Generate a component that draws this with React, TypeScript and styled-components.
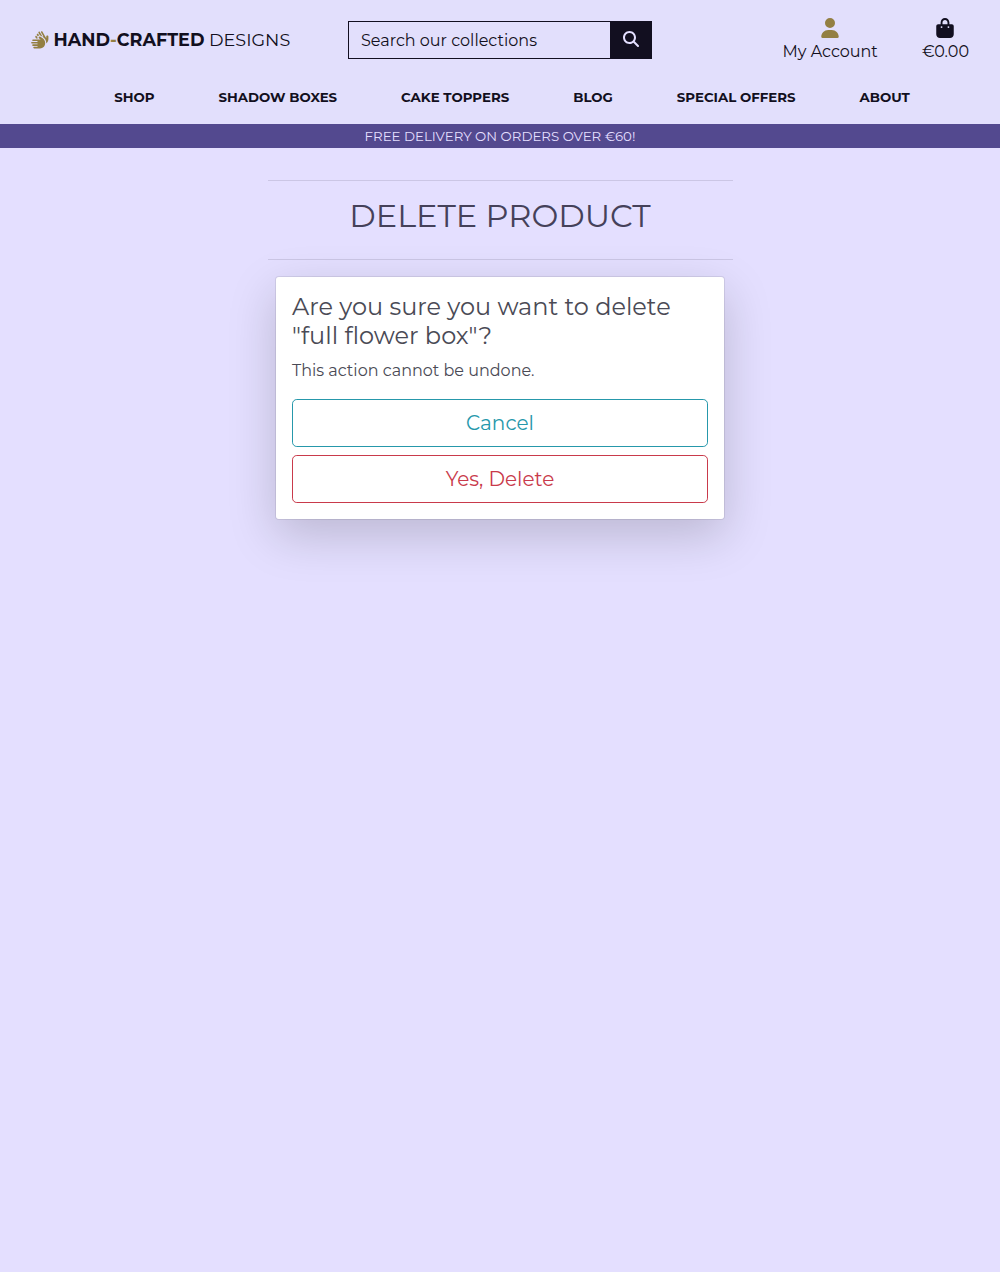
import React from 'react';
import styled, { createGlobalStyle } from 'styled-components';
import { FaHands, FaUser, FaBagShopping, FaMagnifyingGlass } from 'react-icons/fa6';

const ink = '#120f20';
const gold = '#937f42';
const lilac = '#e4dfff';

const GlobalStyle = createGlobalStyle`
  *, *::before, *::after { box-sizing: border-box; }
  body {
    margin: 0;
    background: ${lilac};
    font-family: Montserrat, Inter, sans-serif;
    font-size: 16px;
    color: ${ink};
  }
  a { color: inherit; text-decoration: none; }
`;

const Page = styled.div`
  min-height: 1272px;
`;

const Header = styled.header`
  background: #e2dffc;
  height: 124px;
`;

const TopBar = styled.div`
  display: grid;
  grid-template-columns: 318px 304px 1fr;
  align-items: center;
  height: 80px;
  padding: 0 31px 0 30px;
`;

const Logo = styled.a`
  display: flex;
  align-items: center;
  font-size: 17.6px;
  line-height: 24px;
  white-space: pre;
  svg { color: ${gold}; margin-right: 4px; flex: none; }
`;

const LogoBold = styled.span`
  font-weight: 700;
`;

const LogoDash = styled(LogoBold)`
  color: ${gold};
`;

const SearchForm = styled.form`
  display: flex;
  height: 38px;
  border: 1px solid ${ink};
`;

const SearchInput = styled.input`
  flex: 1;
  min-width: 0;
  border: 0;
  outline: 0;
  padding: 0 12px;
  background: transparent;
  font: 400 16px Montserrat, Inter, sans-serif;
  color: ${ink};
  &::placeholder { color: ${ink}; opacity: 1; }
`;

const SearchButton = styled.button`
  display: flex;
  align-items: center;
  justify-content: center;
  width: 41px;
  border: 0;
  padding: 0 0 2px;
  background: ${ink};
  color: ${lilac};
`;

const Tools = styled.div`
  display: flex;
  justify-content: flex-end;
  gap: 44px;
`;

const Tool = styled.a`
  display: flex;
  flex-direction: column;
  align-items: center;
  padding-top: 2px;
  line-height: 24px;
`;

const ToolIcon = styled.span<{ $color: string }>`
  display: flex;
  height: 22px;
  color: ${(p) => p.$color};
`;

const Nav = styled.nav`
  display: flex;
  justify-content: center;
  gap: 64px;
  padding: 5px 0 0 24px;
  font-size: 13.33px;
  font-weight: 700;
  line-height: 24px;
`;

const Banner = styled.div`
  height: 24px;
  background: #53498f;
  color: ${lilac};
  font-size: 13.33px;
  line-height: 24px;
  text-align: center;
`;

const Main = styled.main`
  width: 466px;
  margin: 32px auto 0;
  padding-left: 1px;
  color: #45415a;
`;

const Title = styled.h1`
  margin: 0;
  height: 80px;
  padding: 16px 1px 0 0;
  border-top: 1px solid #cbc6e5;
  border-bottom: 1px solid #cbc6e5;
  font-size: 32px;
  font-weight: 400;
  line-height: 38px;
  text-align: center;
`;

const Card = styled.section`
  margin: 16px 0 0 7px;
  width: 450px;
  height: 244px;
  padding: 16px 16px 0;
  background: #fff;
  background-clip: padding-box;
  border: 1px solid rgba(0, 0, 0, 0.08);
  border-radius: 4px;
  box-shadow: 0 16px 48px rgba(0, 0, 0, 0.175);
  color: #4a4a55;
`;

const Question = styled.h2`
  margin: 0 0 8px;
  font-size: 24px;
  font-weight: 400;
  line-height: 28.8px;
`;

const Note = styled.p`
  margin: 0 0 16px;
  line-height: 24px;
`;

const Action = styled.button<{ $color: string }>`
  display: block;
  width: 100%;
  height: 48px;
  margin-bottom: 8px;
  padding: 0;
  border: 1px solid ${(p) => p.$color};
  border-radius: 4.8px;
  background: transparent;
  color: ${(p) => p.$color};
  font: 400 20px/30px Montserrat, Inter, sans-serif;
`;

const links = ['SHOP', 'SHADOW BOXES', 'CAKE TOPPERS', 'BLOG', 'SPECIAL OFFERS', 'ABOUT'];

export default function App() {
  return (
    <Page>
      <GlobalStyle />
      <Header>
        <TopBar>
          <Logo href="#">
            <FaHands size={19.5} />
            <LogoBold>HAND</LogoBold>
            <LogoDash>-</LogoDash>
            <LogoBold>CRAFTED</LogoBold>
            <span> DESIGNS</span>
          </Logo>
          <SearchForm>
            <SearchInput placeholder="Search our collections" />
            <SearchButton type="button" aria-label="Search">
              <FaMagnifyingGlass size={16} />
            </SearchButton>
          </SearchForm>
          <Tools>
            <Tool href="#">
              <ToolIcon $color={gold}><FaUser size={20} /></ToolIcon>
              My Account
            </Tool>
            <Tool href="#">
              <ToolIcon $color={ink}><FaBagShopping size={20} /></ToolIcon>
              €0.00
            </Tool>
          </Tools>
        </TopBar>
        <Nav>
          {links.map((label) => (
            <a key={label} href="#">{label}</a>
          ))}
        </Nav>
      </Header>
      <Banner>FREE DELIVERY ON ORDERS OVER €60!</Banner>
      <Main>
        <Title>DELETE PRODUCT</Title>
        <Card>
          <Question>Are you sure you want to delete "full flower box"?</Question>
          <Note>This action cannot be undone.</Note>
          <Action type="button" $color="#2698ab">Cancel</Action>
          <Action type="button" $color="#c93a4b">Yes, Delete</Action>
        </Card>
      </Main>
    </Page>
  );
}
